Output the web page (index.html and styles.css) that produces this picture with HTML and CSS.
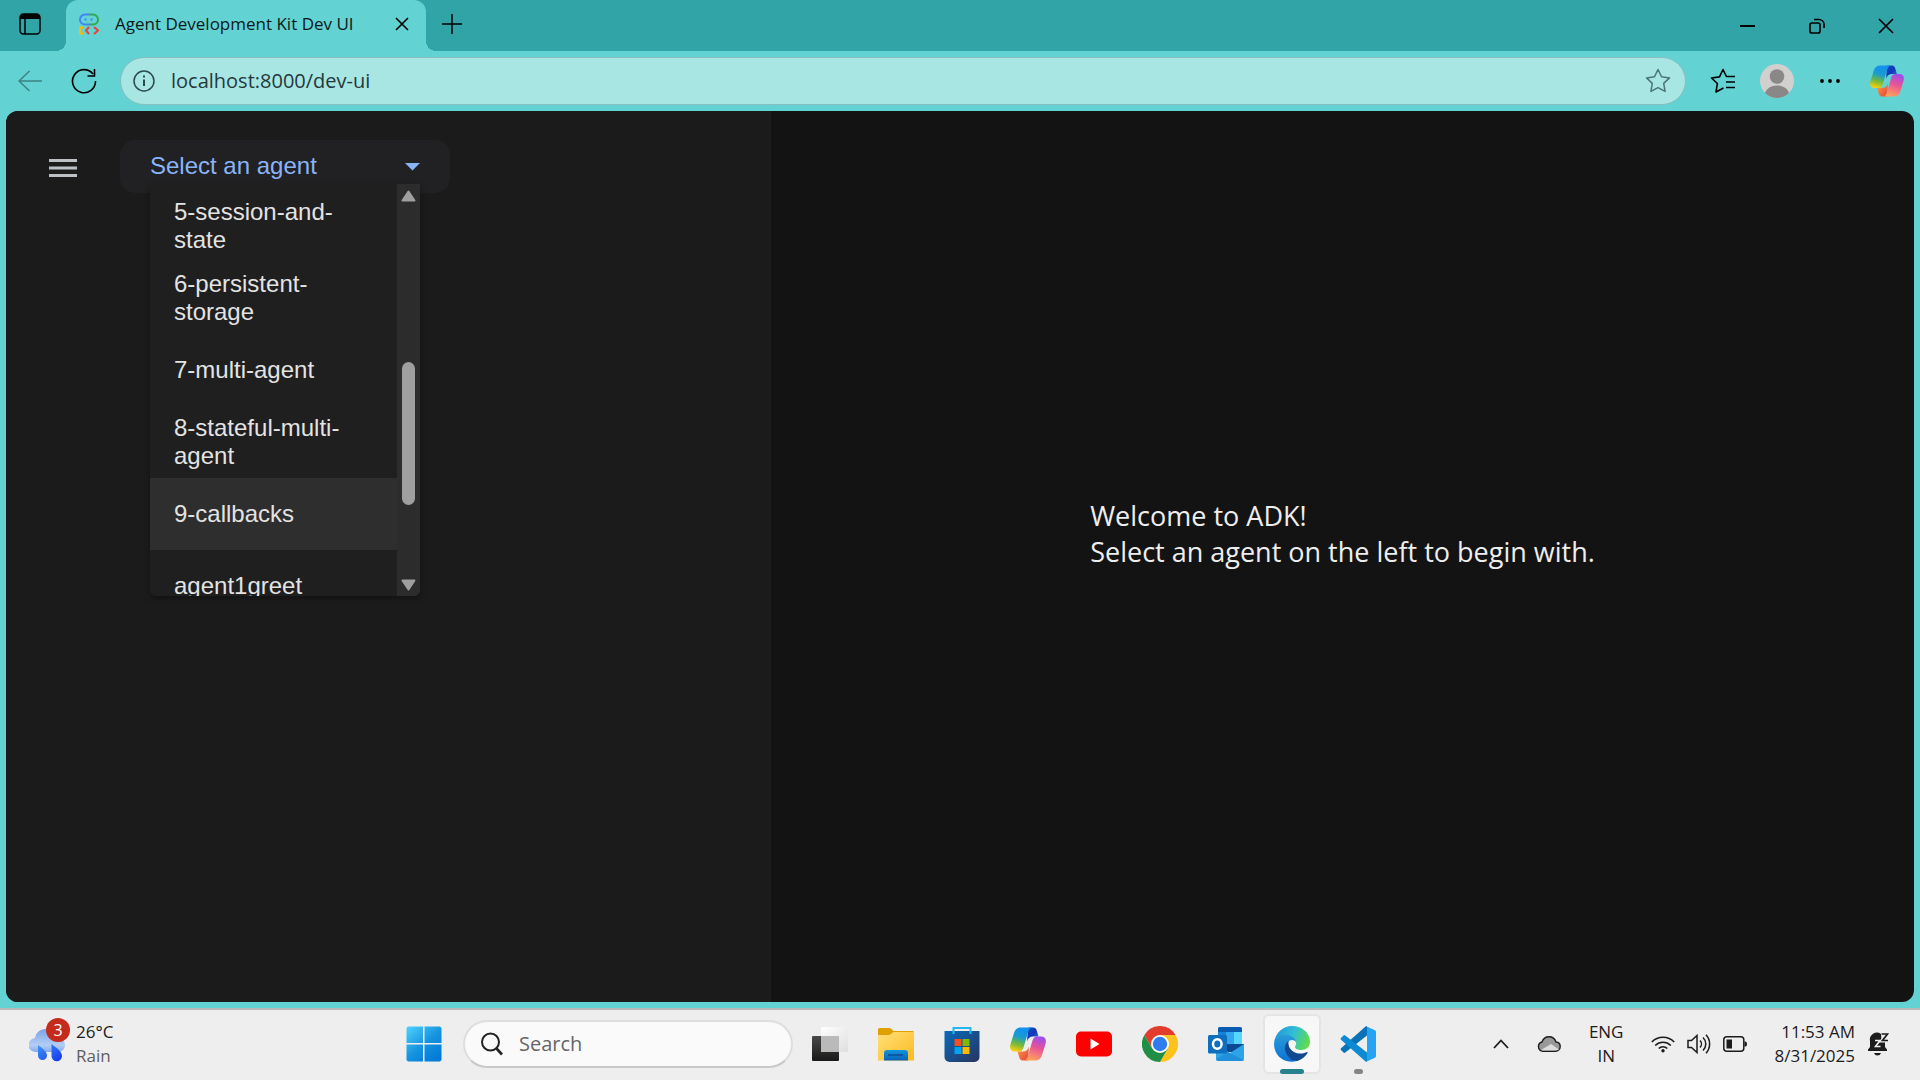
FILE: index.html
```html
<!DOCTYPE html>
<html lang="en">
<head>
<meta charset="utf-8">
<meta name="viewport" content="width=device-width, initial-scale=1">
<title>Agent Development Kit Dev UI</title>
<link rel="stylesheet" href="styles.css">
</head>
<body>
<svg class="defs" aria-hidden="true">
  <defs>
    <linearGradient id="cp-left" x1="0.6" y1="0" x2="0.35" y2="1"><stop offset="0.1" stop-color="#1592ea"/><stop offset="0.4" stop-color="#1a9bd0"/><stop offset="0.7" stop-color="#6fb83e"/><stop offset="1" stop-color="#f5cf0c"/></linearGradient>
    <linearGradient id="cp-right" x1="0.7" y1="0" x2="0.4" y2="1"><stop offset="0" stop-color="#9a4df2"/><stop offset="0.45" stop-color="#e75398"/><stop offset="1" stop-color="#ffa05a"/></linearGradient>
    <linearGradient id="cp-top" x1="0" y1="0" x2="1" y2="1"><stop offset="0" stop-color="#0a4fc4"/><stop offset="0.5" stop-color="#1536b8"/><stop offset="1" stop-color="#2b7fe8"/></linearGradient>
    <linearGradient id="cp-bottom" x1="0" y1="0" x2="1" y2="1"><stop offset="0" stop-color="#ffa044"/><stop offset="1" stop-color="#e4413a"/></linearGradient>
    <symbol id="copilot" viewBox="0 0 36 33">
      <path fill="url(#cp-top)" d="M18 0h5c2.400 0 3.400 1.600 4 4l1.500 5H23c-3 0-5 1.600-6 5z"/>
      <path fill="url(#cp-bottom)" d="M18 33h-5c-2.400 0-3.400-1.600-4-4l-1.500-5H13c3 0 5-1.600 6-5z"/>
      <path fill="url(#cp-left)" d="M11 0h11c-2.500.5-3.500 3-4.300 6l-4.200 14c-.9 2.800-2.200 4-4.500 4H5c-4 0-5.700-3-4.600-7L4 5.500C5.200 1.500 7.500 0 11 0z"/>
      <path fill="url(#cp-right)" d="M25 33H14c2.500-.5 3.500-3 4.300-6l4.200-14c.9-2.800 2.200-4 4.500-4h4c4 0 5.700 3 4.600 7L32 27.500c-1.200 4-3.500 5.500-7 5.500z"/>
    </symbol>
  </defs>
</svg>

<div class="window">
  <header class="tabstrip">
    <button class="icon-btn tab-actions" aria-label="Tab actions">
      <svg width="22" height="22" viewBox="0 0 22 22"><rect x="1" y="1" width="20" height="20" rx="3.500" fill="none" stroke="#000" stroke-width="1.500"/><path d="M1 6V4.500A3.500 3.500 0 0 1 4.500 1h13A3.500 3.500 0 0 1 21 4.500V6z"/><path d="M6 6v15" stroke="#000" stroke-width="1.500"/></svg>
    </button>
    <div class="tab">
      <svg class="favicon" width="20" height="22" viewBox="0 0 20 22" fill="none" stroke-width="2"><path stroke="#4285f4" d="M10 1.500H6a5 5 0 0 0 0 10h4"/><path stroke="#34a853" d="M10 1.500h4a5 5 0 0 1 0 10h-4"/><path stroke="#4285f4" d="M5.500 6.500h2m4 0h2"/><path stroke="#fbbc04" d="M4 14.500H1v6h3"/><path stroke="#ea4335" d="M10 14l-3 3.500 3 3.500M15 14l4 3.500-4 3.500"/></svg>
      <span class="tab-title">Agent Development Kit Dev UI</span>
      <button class="icon-btn tab-close" aria-label="Close tab"><svg width="14" height="14" viewBox="0 0 14 14"><path d="M1 1l12 12M13 1L1 13" stroke="#000" stroke-width="1.600"/></svg></button>
    </div>
    <button class="icon-btn new-tab" aria-label="New tab"><svg width="20" height="20" viewBox="0 0 20 20"><path d="M10 0v20M0 10h20" stroke="#000" stroke-width="1.500"/></svg></button>
    <div class="window-controls">
      <button class="icon-btn" aria-label="Minimize"><svg width="16" height="16" viewBox="0 0 16 16"><path d="M0 8h15" stroke="#000" stroke-width="2"/></svg></button>
      <button class="icon-btn" aria-label="Restore"><svg width="16" height="16" viewBox="0 0 16 16" fill="none" stroke="#000" stroke-width="1.700"><rect x="1" y="5" width="10" height="10" rx="2"/><path d="M5 1.500h5A5 5 0 0 1 15 6v4"/></svg></button>
      <button class="icon-btn" aria-label="Close"><svg width="16" height="16" viewBox="0 0 16 16"><path d="M1 1l14 14M15 1L1 15" stroke="#000" stroke-width="1.700"/></svg></button>
    </div>
  </header>

  <nav class="toolbar" aria-label="Browser">
    <button class="icon-btn nav-btn" aria-label="Back"><svg width="24" height="22" viewBox="0 0 24 22" fill="none" stroke="#3c8384" stroke-width="1.500"><path d="M24 11H1M11.500 1L1 11l10.500 10"/></svg></button>
    <button class="icon-btn nav-btn" aria-label="Refresh"><svg width="26" height="26" viewBox="0 0 26 26" fill="none" stroke="#000" stroke-width="1.600"><path d="M24.500 13A11.500 11.500 0 1 1 22 6M23.500 1v7h-7"/></svg></button>
    <div class="address">
      <svg width="22" height="22" viewBox="0 0 22 22" fill="none" stroke="#2c4a4a" stroke-width="1.500"><circle cx="11" cy="11" r="10"/><path d="M11 9.500V16" stroke-width="2"/><path d="M11 5.500v2" stroke-width="2"/></svg>
      <input class="url" type="text" aria-label="Address" value="localhost:8000/dev-ui">
      <button class="icon-btn" aria-label="Add to favorites"><svg width="26" height="26" viewBox="0 0 26 26" fill="none" stroke="#4b7577" stroke-width="1.500" stroke-linejoin="round"><path d="M13 1.500l3.500 7.300 8 1.100-5.800 5.500 1.400 8L13 19.600l-7.100 3.800 1.400-8L1.500 9.900l8-1.100z"/></svg></button>
    </div>
    <div class="toolbar-end">
      <button class="icon-btn" aria-label="Favorites"><svg width="26" height="26" viewBox="0 0 26 26" fill="none" stroke="#000" stroke-width="1.600" stroke-linejoin="round"><path d="M13.500 20L6 24l1.400-8.500L1.500 10l8-1.100L13 1.500l3.400 7H25M16 14h9M16 19.500h9"/></svg></button>
      <button class="icon-btn" aria-label="Profile"><svg width="34" height="34" viewBox="0 0 34 34"><circle cx="17" cy="17" r="17" fill="#d2d0ce"/><circle cx="17" cy="12.500" r="7.300" fill="#8a8886"/><path d="M5 29c1.500-4.500 6-7.500 12-7.500S27.500 24.500 29 29a17 17 0 0 1-24 0z" fill="#8a8886"/></svg></button>
      <button class="icon-btn more" aria-label="Settings and more"><svg width="20" height="6" viewBox="0 0 20 6"><circle cx="2" cy="3" r="1.900"/><circle cx="10" cy="3" r="1.900"/><circle cx="18" cy="3" r="1.900"/></svg></button>
      <button class="icon-btn" aria-label="Copilot"><svg width="34" height="32"><use href="#copilot"/></svg></button>
    </div>
  </nav>

  <div class="page">
    <aside class="side">
      <button class="icon-btn menu-btn" aria-label="Toggle panel"><svg width="28" height="18" viewBox="0 0 28 18"><path d="M0 1.500h28M0 9h28M0 16.500h28" stroke="#bdc1c6" stroke-width="3"/></svg></button>
      <div class="agent-select">
        <select class="agent-field" aria-label="Select an agent">
          <option>Select an agent</option>
        </select>
        <svg class="caret" width="15" height="8" viewBox="0 0 15 8"><path d="M0 0h15L7.500 7.500z" fill="#8ab4f8"/></svg>
        <div class="agent-panel">
          <ul class="options" role="listbox" aria-label="Agents">
            <li role="option">5-session-and-state</li>
            <li role="option">6-persistent-storage</li>
            <li role="option">7-multi-agent</li>
            <li role="option">8-stateful-multi-agent</li>
            <li role="option" class="active">9-callbacks</li>
            <li role="option">agent1greet</li>
          </ul>
          <div class="scrollbar" aria-hidden="true">
            <svg width="15" height="12" viewBox="0 0 15 12"><path d="M7.500 1.500L13.500 10.500h-12z" fill="#9f9f9f" stroke="#9f9f9f" stroke-width="2" stroke-linejoin="round"/></svg>
            <span class="thumb"></span>
            <svg width="15" height="12" viewBox="0 0 15 12"><path d="M7.500 10.500L13.500 1.500h-12z" fill="#9f9f9f" stroke="#9f9f9f" stroke-width="2" stroke-linejoin="round"/></svg>
          </div>
        </div>
      </div>
    </aside>
    <main class="content">
      <p class="welcome">Welcome to ADK!<br>Select an agent on the left to begin with.</p>
    </main>
  </div>
</div>

<footer class="taskbar">
  <div class="taskbar-start">
    <button class="weather">
      <span class="weather-icon">
        <svg width="37" height="36" viewBox="0 0 37 36"><defs><linearGradient id="cloud" x1="0" y1="0" x2="0" y2="1"><stop offset="0" stop-color="#7ba3e8"/><stop offset="0.7" stop-color="#b4cdf5"/><stop offset="1" stop-color="#88aaea"/></linearGradient><linearGradient id="drop" x1="0" y1="0" x2="1" y2="1"><stop offset="0" stop-color="#3f9bf5"/><stop offset="1" stop-color="#1232ee"/></linearGradient></defs><path fill="url(#cloud)" d="M7 26a7 7 0 0 1-1-14c.5-5 5-9 10.500-9S27 6.500 28 12c5 0 8 3 8 7s-3 7-7 7z"/><path fill="url(#drop)" d="M9 19c4 3 9 6.500 9 10.500a4.500 4.500 0 0 1-9 0zM22.500 18c5 4 10.500 7.500 10.500 12a5 5 0 0 1-10.500 0z"/></svg>
        <span class="badge">3</span>
      </span>
      <span class="weather-text"><span>26°C</span><span class="muted">Rain</span></span>
    </button>
  </div>
  <div class="apps">
    <button class="app" aria-label="Start"><svg width="36" height="36" viewBox="0 0 36 36"><defs><linearGradient id="win" gradientUnits="userSpaceOnUse" x1="0" y1="0" x2="30" y2="36"><stop offset="0" stop-color="#50d4ff"/><stop offset="0.55" stop-color="#1593df"/><stop offset="1" stop-color="#0078d6"/></linearGradient></defs><path fill="url(#win)" d="M2 .5h15v16.500H.5V2zM18.500.5H34L35.500 2v15h-17zM.5 18.500H17v17H2L.5 34zM18.500 18.500h17V34L34 35.500H18.500z"/></svg></button>
    <label class="search">
      <svg width="22" height="24" viewBox="0 0 22 24" fill="none" stroke="#222"><circle cx="9.500" cy="10" r="8.500" stroke-width="2"/><path d="M15.500 16.500l5.500 6" stroke-width="2.600"/></svg>
      <input type="search" placeholder="Search" aria-label="Search">
    </label>
    <button class="app" aria-label="Task view"><svg width="36" height="36" viewBox="0 0 36 36"><defs><linearGradient id="tv" x1="0" y1="0" x2="0" y2="1"><stop offset="0" stop-color="#4a4947"/><stop offset="1" stop-color="#191919"/></linearGradient><linearGradient id="tv2" x1="0" y1="0" x2="1" y2="1"><stop offset="0" stop-color="#fff"/><stop offset="1" stop-color="#dedede"/></linearGradient></defs><rect y="10" width="27" height="25" rx="1" fill="url(#tv)"/><rect x="9" y="1" width="27" height="25" rx="1" fill="url(#tv2)"/><path d="M9 10h18v16H9z" fill="#bababa"/></svg></button>
    <button class="app" aria-label="File Explorer"><svg width="36" height="36" viewBox="0 0 36 36"><defs><linearGradient id="fold" x1="0" y1="0" x2="1" y2="1"><stop offset="0" stop-color="#ffe07a"/><stop offset="1" stop-color="#fbba20"/></linearGradient><linearGradient id="fblue" x1="0" y1="0" x2="0" y2="1"><stop offset="0" stop-color="#1495de"/><stop offset="1" stop-color="#0862b8"/></linearGradient></defs><path fill="#e0a000" d="M0 3.500Q0 2 1.500 2H11q1.500 0 2.500 1l2 2H35l1 1v6H0z"/><path fill="url(#fold)" d="M0 9h10q2 0 3-1l2.500-2H36v28.500H0z"/><path fill="url(#fblue)" d="M6 34.500V27a3 3 0 0 1 3-3h18a3 3 0 0 1 3 3v7.500z"/><path d="M10 29h15" stroke="#064e96" stroke-width="1.500"/></svg></button>
    <button class="app" aria-label="Microsoft Store"><svg width="36" height="36" viewBox="0 0 36 36"><defs><linearGradient id="store" x1="0" y1="0" x2="1" y2="1"><stop offset="0" stop-color="#0969bb"/><stop offset="1" stop-color="#29355f"/></linearGradient></defs><path fill="url(#store)" d="M.5 5h35v26a5 5 0 0 1-5 5h-25a5 5 0 0 1-5-5z"/><path d="M9.500 8V2h17v6" fill="none" stroke="#25b8f0" stroke-width="2"/><path fill="#f25022" d="M10.500 13h7v7h-7z"/><path fill="#7fba00" d="M18.500 13h7v7h-7z"/><path fill="#00a4ef" d="M10.500 21h7v7h-7z"/><path fill="#ffb900" d="M18.500 21h7v7h-7z"/></svg></button>
    <button class="app" aria-label="Copilot"><svg width="36" height="34"><use href="#copilot"/></svg></button>
    <button class="app" aria-label="YouTube"><svg width="36" height="26" viewBox="0 0 36 26"><rect y="0.500" width="36" height="25" rx="5" fill="#f00"/><path fill="#fff" d="M14.500 7.500v11l9-5.500z"/></svg></button>
    <button class="app" aria-label="Chrome"><svg width="36" height="36" viewBox="0 0 36 36"><path fill="#e33b2e" d="M2.400 9A18 18 0 0 1 33.600 9H18L10.200 22.500z"/><path fill="#fcc31e" d="M33.600 9A18 18 0 0 1 18 36l7.800-13.500L18 9z"/><path fill="#1f8f45" d="M2.400 9A18 18 0 0 0 18 36l7.800-13.500H10.200z"/><circle cx="18" cy="18" r="9" fill="#fff"/><circle cx="18" cy="18" r="7.200" fill="#2f7bf0"/></svg></button>
    <button class="app" aria-label="Outlook"><svg width="36" height="36" viewBox="0 0 36 36"><path fill="#0a5ab0" d="M10 2.500Q10 1 11.500 1h21Q34 1 34 2.500V20H10z"/><path fill="#1783d8" d="M10 6h8v12h-8z"/><path fill="#31a5ee" d="M18 6h8v12h-8z"/><path fill="#55d6fb" d="M26 6h8v12h-8z"/><path fill="#0b4a92" d="M18 18h18v8H18z"/><path fill="#2ba4e8" d="M8 18v15q0 2 2 2h24q2 0 2-2V18L22 27z"/><path fill="#1678cc" d="M20 26l16 8.500q-1 .5-2 .5H10q-2 0-2-2z" opacity=".45"/><rect y="9" width="19" height="18.500" rx="1.500" fill="#106ebe"/><ellipse cx="9.300" cy="18" rx="4.300" ry="4.800" fill="none" stroke="#fff" stroke-width="2.500"/></svg></button>
    <button class="app running" aria-label="Edge"><svg width="36" height="36" viewBox="0 0 36 36"><defs><linearGradient id="e1" x1="0" y1="0.300" x2="1" y2="0.600"><stop offset="0" stop-color="#2496dc"/><stop offset="0.500" stop-color="#30bfd5"/><stop offset="1" stop-color="#63dd45"/></linearGradient><linearGradient id="e2" x1="0" y1="0" x2="0" y2="1"><stop offset="0" stop-color="#2a9bd8"/><stop offset="1" stop-color="#0a72d6"/></linearGradient></defs><path fill="url(#e1)" d="M0 17C1 7 9 0 18 0c10.500 0 18 7.500 18 15.500 0 5.500-4 8.500-8.500 8.500-4 0-6.500-1.300-6.500-2.800 0-1 1.200-1.700 1.200-4.200 0-3-3-6-8.200-6C7 11 2 13 0 17z"/><path fill="url(#e2)" d="M0 18C.5 12 5.500 8.800 11 8.800c7 0 11.200 4.200 11.200 7.800-.7-1.500-2.200-2.600-4.200-2.600-4 0-6 4-6 8 0 7 5.500 12.500 11 13C9.500 38.500 0 29 0 18z"/><path fill="#114a91" d="M15 14.800c-4 2.200-5 7-3.200 11.500C14 32 19 35.500 23.500 35c4.500-1.500 8-4.500 10-8 .5-1-.3-1.200-1-.8-6 3-14 1-17-4.700-1.200-2.500-1.500-5-.5-6.700z"/></svg></button>
    <button class="app background" aria-label="Visual Studio Code"><svg width="36" height="36" viewBox="0 0 36 36"><path fill="#0b72b8" d="M1 24l2.500 2.600q.8.600 1.800 0L27 9.500V0q-1 0-2 1L1 22.300q-1 .8 0 1.700z"/><path fill="#0d8ad4" d="M1 12l2.500-2.600q.8-.6 1.800 0L27 26.500V36q-1 0-2-1L1 13.700q-1-.8 0-1.700z"/><path fill="#26a3f2" d="M26 .2l8.500 3.800q1.500.7 1.500 2v24q0 1.300-1.500 2L26 35.800q1 0 1-1.500V1.700Q27 .2 26 .2z"/></svg></button>
  </div>
  <div class="tray">
    <button class="icon-btn chevron" aria-label="Show hidden icons"><svg width="16" height="10" viewBox="0 0 16 10"><path d="M1 9l7-7.500L15 9" fill="none" stroke="#1c1c1c" stroke-width="1.800"/></svg></button>
    <button class="icon-btn cloud" aria-label="OneDrive"><svg width="24" height="16" viewBox="0 0 24 16"><path d="M5.500 15.200a4.700 4.700 0 0 1-.5-9.200C6 3 8.500.8 12 .8s6 2 7 5.200c2.500.2 4.200 2 4.200 4.600s-2 4.600-4.700 4.600z" fill="#999" stroke="#1c1c1c" stroke-width="1.400"/><path d="M4 14l10-6 8 5.500-3.500 1h-13z" fill="#dcdcdc"/></svg></button>
    <button class="lang">ENG<br>IN</button>
    <button class="quick" aria-label="Network, volume and battery">
      <svg width="24" height="18" viewBox="0 0 24 18" fill="none" stroke="#1c1c1c" stroke-width="1.600"><path d="M.8 7a15.500 15.500 0 0 1 22.400 0M4.200 10.500a11 11 0 0 1 15.600 0M7.700 13.500a6.200 6.200 0 0 1 8.600 0"/><circle cx="12" cy="15.800" r="1.700" fill="#1c1c1c" stroke="none"/></svg>
      <svg width="24" height="20" viewBox="0 0 24 20" fill="none" stroke="#1c1c1c" stroke-width="1.500"><path d="M1 6.500h3.500L10 1.500v17l-5.500-5H1zM13 6.500a5 5 0 0 1 0 7M16 3.500a9 9 0 0 1 0 13M19 .8a13.500 13.500 0 0 1 0 18.400"/></svg>
      <svg width="24" height="16" viewBox="0 0 24 16"><rect x="0.800" y="0.800" width="20" height="14.400" rx="3" fill="none" stroke="#1c1c1c" stroke-width="1.500"/><path d="M3.500 3.500h5.500v9H3.500zM21.500 5.500h1q1.500 0 1.500 2.500t-1.500 2.500h-1z" fill="#1c1c1c"/></svg>
    </button>
    <button class="clock">11:53 AM<br>8/31/2025</button>
    <button class="icon-btn bell" aria-label="Notifications"><svg width="22" height="24" viewBox="0 0 22 24"><path fill="#1c1c1c" d="M3 15V9a7 7 0 0 1 11-7l.5 5.500L18 9v6l2 2.500v1.500H1v-1.500zM7 21h7q-1 2.500-3.500 2.500T7 21z"/><path d="M8 8.500h5L8.500 14.500H13.500" fill="none" stroke="#eee" stroke-width="1.600"/><path d="M14.500 2H20.500l-5 6.500H21" fill="none" stroke="#eee" stroke-width="4"/><path d="M14.500 2H20.500l-5 6.500H21" fill="none" stroke="#1c1c1c" stroke-width="1.700"/></svg></button>
  </div>
</footer>
</body>
</html>
```
FILE: styles.css
```css
* { box-sizing: border-box; }

body {
  margin: 0;
  min-height: 100vh;
  display: flex;
  flex-direction: column;
  background: #62d2d2;
  color: #1c1c1c;
  font-family: "Open Sans", "Noto Sans", sans-serif;
}

button, input, select {
  margin: 0;
  padding: 0;
  border: 0;
  background: none;
  color: inherit;
  font: inherit;
}

svg { display: block; flex: none; }

.defs { position: absolute; width: 0; height: 0; }

.icon-btn { display: flex; align-items: center; justify-content: center; }

.window { flex: 1; display: flex; flex-direction: column; }

/* Tab strip */
.tabstrip { display: flex; height: 51px; background: #31a4a8; }
.tab-actions { width: 60px; padding-bottom: 4px; }
.tab {
  position: relative;
  display: flex;
  align-items: center;
  width: 360px;
  margin-left: 6px;
  padding: 0 17px 3px 13px;
  border-radius: 12px 12px 0 0;
  background: #62d2d2;
  color: #0c1a1a;
}
.tab::before, .tab::after {
  content: "";
  position: absolute;
  bottom: 0;
  width: 10px;
  height: 10px;
}
.tab::before { right: 100%; background: radial-gradient(circle at 0 0, #31a4a8 10px, #62d2d2 10px); }
.tab::after { left: 100%; background: radial-gradient(circle at 100% 0, #31a4a8 10px, #62d2d2 10px); }
.tab-title { flex: 1; margin-left: 16px; font-size: 17px; line-height: 24px; white-space: nowrap; }
.new-tab { width: 52px; padding-bottom: 4px; }
.window-controls { display: flex; margin-left: auto; }
.window-controls .icon-btn { width: 69px; }

/* Toolbar */
.toolbar { display: flex; align-items: center; height: 60px; padding: 0 16px 0 3px; }
.nav-btn { width: 54px; height: 48px; }
.address {
  flex: 1;
  display: flex;
  align-items: center;
  gap: 16px;
  height: 48px;
  margin-left: 9px;
  padding: 0 14px 0 12px;
  border: 1px solid #88bebe;
  border-radius: 24px;
  background: #a8e6e4;
}
.url { flex: 1; font-size: 20px; line-height: 28px; color: #24393a; }
.toolbar-end { display: flex; align-items: center; gap: 24px; margin-left: 24px; }
.more { margin: 0 6px 0 2px; }

/* Page */
.page {
  flex: 1;
  display: flex;
  margin: 0 6px 6px;
  border-radius: 12px;
  overflow: hidden;
  background: #131314;
}
.side { display: flex; align-items: flex-start; flex: 0 0 765px; padding: 29px 0 0 42px; background: #1b1b1b; }
.menu-btn { width: 30px; height: 54px; margin-right: 42px; padding-top: 2px; }
.agent-select { position: relative; width: 330px; font-family: "Liberation Sans", Arial, sans-serif; font-size: 24px; }
.agent-field {
  appearance: none;
  display: block;
  width: 100%;
  height: 53px;
  padding: 0 60px 2px 30px;
  border-radius: 15px;
  background: #212123;
  color: #8ab4f8;
}
.caret { position: absolute; right: 30px; top: 23px; }
.agent-panel {
  position: absolute;
  top: 44px;
  left: 30px;
  right: 30px;
  display: flex;
  height: 412px;
  border-radius: 0 0 6px 6px;
  overflow: hidden;
  background: #1f1f1f;
  box-shadow: 0 3px 6px rgba(0, 0, 0, 0.3);
}
.options { flex: 1; margin: 0; padding: 6px 0 0; list-style: none; overflow: hidden; color: #e3e3e3; line-height: 28px; }
.options li { display: flex; align-items: center; height: 72px; padding: 0 24px; }
.options .active { background: #2e2e2e; }
.scrollbar {
  display: flex;
  flex-direction: column;
  align-items: center;
  justify-content: space-between;
  width: 23px;
  padding: 6px 0 5px;
  background: #2c2c2c;
}
.thumb { width: 13px; height: 143px; margin-top: 86px; border-radius: 7px; background: #9f9f9f; }
.content { flex: 1; display: flex; align-items: center; justify-content: center; padding-bottom: 46px; }
.welcome { margin: 0; color: #eee; font-size: 27px; line-height: 36px; }

/* Taskbar */
.taskbar {
  display: flex;
  align-items: center;
  height: 72px;
  padding-bottom: 2px;
  border-top: 2px solid #bababa;
  background: #eee;
  font-size: 17px;
  line-height: 24px;
}
.taskbar-start { flex: 0 0 391px; padding-left: 29px; }
.weather { display: flex; align-items: center; gap: 10px; text-align: left; }
.weather-icon { position: relative; }
.weather-text { display: flex; flex-direction: column; }
.muted { color: #5f5f5f; }
.badge {
  position: absolute;
  top: -8px;
  left: 17px;
  width: 24px;
  height: 24px;
  border-radius: 50%;
  background: #c42b1c;
  color: #fff;
  font-size: 16px;
  line-height: 24px;
  text-align: center;
}
.apps { display: flex; align-items: center; }
.app { position: relative; display: flex; align-items: center; justify-content: center; width: 58px; height: 60px; margin: 0 4px; border-radius: 6px; }
.running { border: 2px solid #e4e4e4; background: #f7f7f7; }
.running::after, .background::after { content: ""; position: absolute; bottom: 0; height: 5px; border-radius: 3px; }
.running::after { width: 24px; background: #26838e; bottom: -2px; }
.background::after { width: 9px; background: #858585; }
.search {
  display: flex;
  align-items: center;
  gap: 16px;
  width: 330px;
  height: 48px;
  margin: 0 4px 0 6px;
  padding: 0 16px;
  border: 2px solid #dedede;
  border-bottom-color: #c8c8c8;
  border-radius: 24px;
  background: #fafafa;
}
.search input { flex: 1; min-width: 0; font-size: 20px; line-height: 28px; }
.search input::placeholder { color: #666; opacity: 1; }
.tray { display: flex; align-items: center; margin-left: auto; padding-right: 31px; }
.chevron { width: 24px; }
.cloud { width: 24px; margin-left: 24px; }
.lang { margin-left: 28px; text-align: center; }
.quick { display: flex; align-items: center; gap: 12px; margin-left: 28px; }
.clock { margin-left: 27px; text-align: right; }
.bell { margin-left: 12px; }
```
